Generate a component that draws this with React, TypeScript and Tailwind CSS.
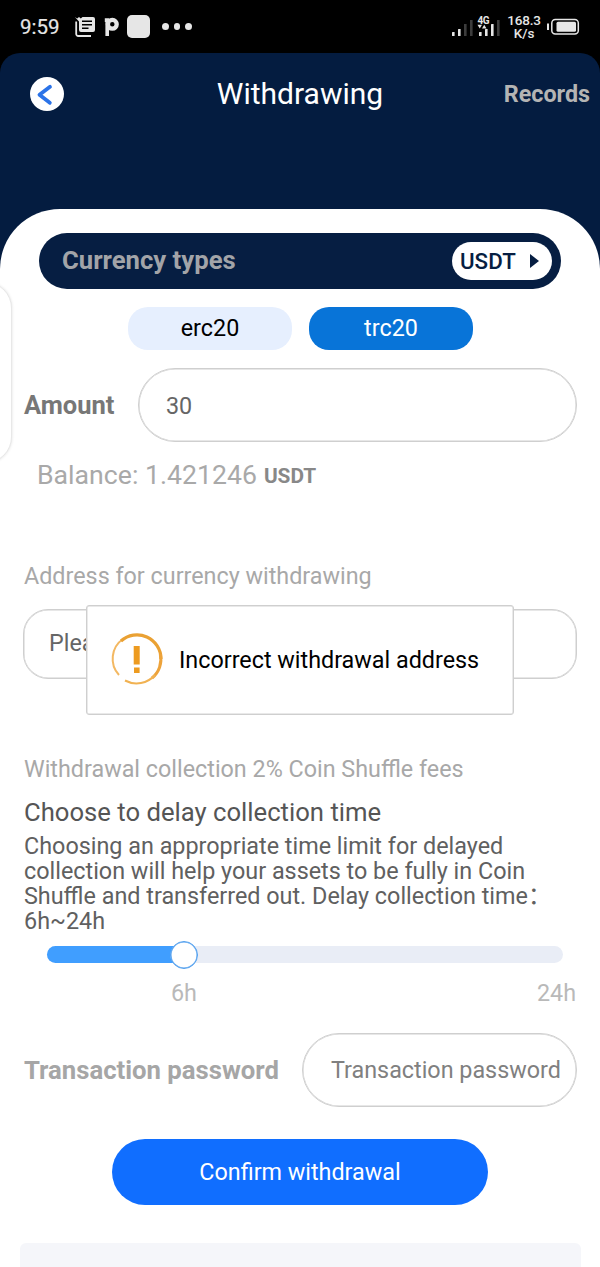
function SignalIcons() {
  return (
    <svg width="50" height="30" viewBox="0 0 50 30" fill="#e6e6e6" className="shrink-0">
      <rect x="1" y="20" width="2.600" height="4" rx="0.5" />
      <rect x="7" y="17" width="2.600" height="7" rx="0.5" />
      <rect x="13" y="12" width="2.600" height="12" fill="#3c3c3c" />
      <rect x="19" y="8" width="2.600" height="16" fill="#3c3c3c" />
      <path d="M26.500 12.800h4.500l-2.250 3.600zM31 16.400h4.500L33.250 12.800z" />
      <rect x="28" y="20" width="2.600" height="4" rx="0.5" />
      <rect x="34" y="17" width="2.600" height="7" rx="0.5" />
      <rect x="40" y="12" width="2.600" height="12" rx="0.5" />
      <rect x="46" y="8" width="2.600" height="16" fill="#3c3c3c" />
      <text x="26.500" y="11.500" fontFamily="Roboto, sans-serif" fontSize="10" fontWeight="700" textLength="12">4G</text>
    </svg>
  );
}

function StatusBar() {
  return (
    <div className="flex h-[53px] items-center bg-black pl-5 pr-5 text-[#e6e6e6]">
      <span className="w-[54px] pt-px text-[20.5px] font-normal leading-none [-webkit-text-stroke:0.2px_#e6e6e6]">9:59</span>
      <svg width="22" height="22" viewBox="0 0 22 22" fill="none" className="shrink-0">
        <path d="M2.200 5.500V18a2 2 0 0 0 2 2H17" stroke="#e6e6e6" strokeWidth="1.800" />
        <path d="M0.800 1l2.400 1.600L5 1l1.800 1.400L8.500 1H19a2 2 0 0 1 2 2v11a2 2 0 0 1-2 2H7a2 2 0 0 1-2-2V5.500z" fill="#e6e6e6" />
        <path d="M8 5.200h10M8 8.700h10M8 12.200h6.500" stroke="#000" strokeWidth="1.500" />
      </svg>
      <svg width="16" height="22" viewBox="0 0 16 22" className="ml-[8px] mr-[7px] shrink-0" fill="none">
        <path d="M0.800 2.200H5V20H1.400V6H0.800z" fill="#e6e6e6" />
        <circle cx="8.300" cy="8.300" r="4.400" stroke="#e6e6e6" strokeWidth="4.300" />
      </svg>
      <div className="h-[23px] w-[23px] shrink-0 rounded-[5px] bg-[#e6e6e6]" />
      <div className="ml-[12px] flex gap-[5px]">
        <i className="h-[6.500px] w-[6.500px] rounded-full bg-[#e6e6e6]" />
        <i className="h-[6.500px] w-[6.500px] rounded-full bg-[#e6e6e6]" />
        <i className="h-[6.500px] w-[6.500px] rounded-full bg-[#e6e6e6]" />
      </div>
      <div className="ml-auto flex items-center">
        <SignalIcons />
        <div className="ml-[5px] w-[36px] text-center text-[13.500px] font-medium leading-[14px]">
          <div className="tracking-[-0.2px]">168.3</div>
          <div className="-mt-px">K/s</div>
        </div>
        <svg width="33" height="18" viewBox="0 0 33 18" className="ml-[5px] shrink-0" fill="none">
          <rect x="0" y="5.500" width="2" height="6.500" fill="#e6e6e6" />
          <rect x="4.800" y="1.500" width="26.500" height="14.500" rx="3.500" stroke="#e6e6e6" strokeWidth="1.500" />
          <rect x="9.500" y="3.700" width="19.500" height="10" rx="1.500" fill="#e6e6e6" />
        </svg>
      </div>
    </div>
  );
}

function Header() {
  return (
    <header className="grid h-[82px] grid-cols-[1fr_auto_1fr] items-center">
      <button className="ml-[30px] flex h-[34px] w-[34px] items-center justify-center rounded-full bg-white">
        <svg width="34" height="34" viewBox="0 0 34 34" fill="none">
          <path d="M20 9.800L9.500 17.800l10.300 8" stroke="#2b73e8" strokeWidth="3.800" strokeLinecap="round" strokeLinejoin="round" />
        </svg>
      </button>
      <h1 className="text-[30px] text-white">Withdrawing</h1>
      <span className="pr-[10px] pt-[2px] text-right text-[23.333px] font-bold text-[#b4b4b4]">Records</span>
    </header>
  );
}

function WarningToast() {
  return (
    <div className="absolute left-[62px] top-[-4px] flex h-[110px] w-[428px] items-center rounded-[3px] border-[1.5px] border-[#cfcfcf] bg-white pl-[23px] text-black shadow-[inset_0_0_0_0.5px_#d4d4d4]">
      <svg width="54" height="54" viewBox="0 0 54 54" fill="none" className="mb-[2px] shrink-0">
        <path d="M9 43A24 24 0 0 1 13 7" stroke="#f3b862" strokeWidth="2" />
        <path d="M11 9A24 24 0 0 1 51 27" stroke="#eaa133" strokeWidth="3.200" />
        <path d="M50.300 22A24 24 0 0 1 42 46" stroke="#eda33b" strokeWidth="3" />
        <path d="M45 43A24.500 24.500 0 0 1 15 48.500" stroke="#f1b252" strokeWidth="2" />
        <path d="M23.700 14h6v18.500h-6zM24 35.500h5.600v5.600H24z" fill="#ed9b20" />
      </svg>
      <span className="ml-[15px] whitespace-nowrap pt-[2px] text-[23.333px]">Incorrect withdrawal address</span>
    </div>
  );
}

function DelaySlider() {
  return (
    <div>
      <div className="ml-[23px] mr-[13px] flex h-[41px] items-center">
        <div className="flex h-[17px] w-full items-center rounded-full bg-[#e9edf6]">
          <div className="-mr-[14px] h-full w-[137px] rounded-l-full bg-[#409eff]" />
          <div className="h-[28px] w-[28px] shrink-0 rounded-full border border-[#4f9eee] bg-white shadow-[inset_0_0_0_0.5px_#4f9eee]" />
        </div>
      </div>
      <div className="flex h-[36px] items-center justify-between pl-[147px] pt-[2px] text-[23.333px] text-[#b9b9b9]">
        <span>6h</span>
        <span>24h</span>
      </div>
    </div>
  );
}

export default function App() {
  return (
    <div className="relative h-[1267px] w-[600px] overflow-hidden bg-black font-[Roboto,'Noto_Sans_CJK_SC',sans-serif] leading-none">
      <StatusBar />
      <div className="h-[1214px] rounded-t-[20px] bg-[#041c40]">
        <Header />
        <main className="mt-[74px] h-[1058px] rounded-t-[60px] bg-white px-6 pt-[24px]">
          <div className="mx-[15px] flex h-[56px] items-center justify-between rounded-full bg-[#061e42] pl-[23px] pr-[9px]">
            <span className="text-[25.667px] font-bold text-[#a2a4a8]">Currency types</span>
            <button className="flex h-[38px] w-[100px] items-center rounded-full bg-white pl-2 text-[#061e42]">
              <span className="pt-px text-[22.333px] font-medium">USDT</span>
              <svg width="9" height="14" viewBox="0 0 9 14" className="ml-[14px]">
                <path d="M0 0l9 7-9 7z" fill="#061e42" />
              </svg>
            </button>
          </div>

          <div className="mt-[18px] flex justify-center gap-[17px] text-[23.333px]">
            <button className="h-[43px] w-[164px] rounded-[20px] bg-[#e6effe] pl-px text-black">erc20</button>
            <button className="h-[43px] w-[164px] rounded-[20px] bg-[#0874d8] pl-px text-white">trc20</button>
          </div>

          <div className="mr-[-1px] mt-[18px] flex h-[74px] items-center">
            <span className="w-[114px] pt-[2px] text-[25.500px] font-bold text-[#777]">Amount</span>
            <div className="flex h-full flex-1 items-center rounded-full border border-[#cfcfcf] pl-[27px] pt-[3px] text-[23.333px] text-[#666] shadow-[inset_0_0_0_0.5px_#cfcfcf]">30</div>
          </div>

          <div className="flex h-[66px] items-center pl-[13px] pt-px text-[26.667px] text-[#a9a9a9]">
            Balance: 1.421246
            <b className="ml-[7px] pt-px text-[20.833px] text-[#888]">USDT</b>
          </div>

          <div className="mt-[52px] flex h-[34px] items-center text-[23.333px] text-[#a8a8a8]">Address for currency withdrawing</div>
          <div className="relative mt-[15px] h-[70px]">
            <div className="-mx-px flex h-full items-center rounded-[25px] border border-[#cfcfcf] pl-[25px] text-[23.333px] text-[#666] shadow-[inset_0_0_0_0.5px_#cfcfcf]">Plea</div>
            <WarningToast />
          </div>

          <div className="mt-[75px] flex h-[32px] items-center text-[23.333px] text-[#a8a8a8]">Withdrawal collection 2% Coin Shuffle fees</div>
          <div className="mt-[10px] flex h-[34px] items-center text-[25.667px] text-[#555]">Choose to delay collection time</div>
          <p className="mt-[4px] h-[100px] text-[23.370px] leading-[25px] text-[#606060]">
            Choosing an appropriate time limit for delayed collection will help your assets to be fully in Coin Shuffle and transferred out. Delay collection time：6h~24h
          </p>
          <DelaySlider />

          <div className="mr-[-1px] mt-[22px] flex h-[74px] items-center">
            <span className="w-[278px] pt-[2px] text-[25.700px] font-bold text-[#a6a6a6]">Transaction password</span>
            <div className="flex h-full flex-1 items-center whitespace-nowrap rounded-full border border-[#cfcfcf] pl-[28px] pt-px text-[23.333px] text-[#808080] shadow-[inset_0_0_0_0.5px_#cfcfcf]">Transaction password</div>
          </div>

          <button className="mx-auto mt-[32px] block h-[66px] w-[376px] rounded-full bg-[#106eff] pt-[2px] text-[23.333px] text-white">Confirm withdrawal</button>
          <div className="-ml-1 -mr-[5px] mt-[38px] h-[24px] rounded-t-[6px] bg-[#f5f6fa]" />
        </main>
      </div>
      <div className="absolute left-[-30px] top-[282px] h-[181px] w-[42px] rounded-r-[26px] border border-[#e8e8e8] bg-white shadow-[0_0_3px_rgba(0,0,0,0.12)]" />
    </div>
  );
}
